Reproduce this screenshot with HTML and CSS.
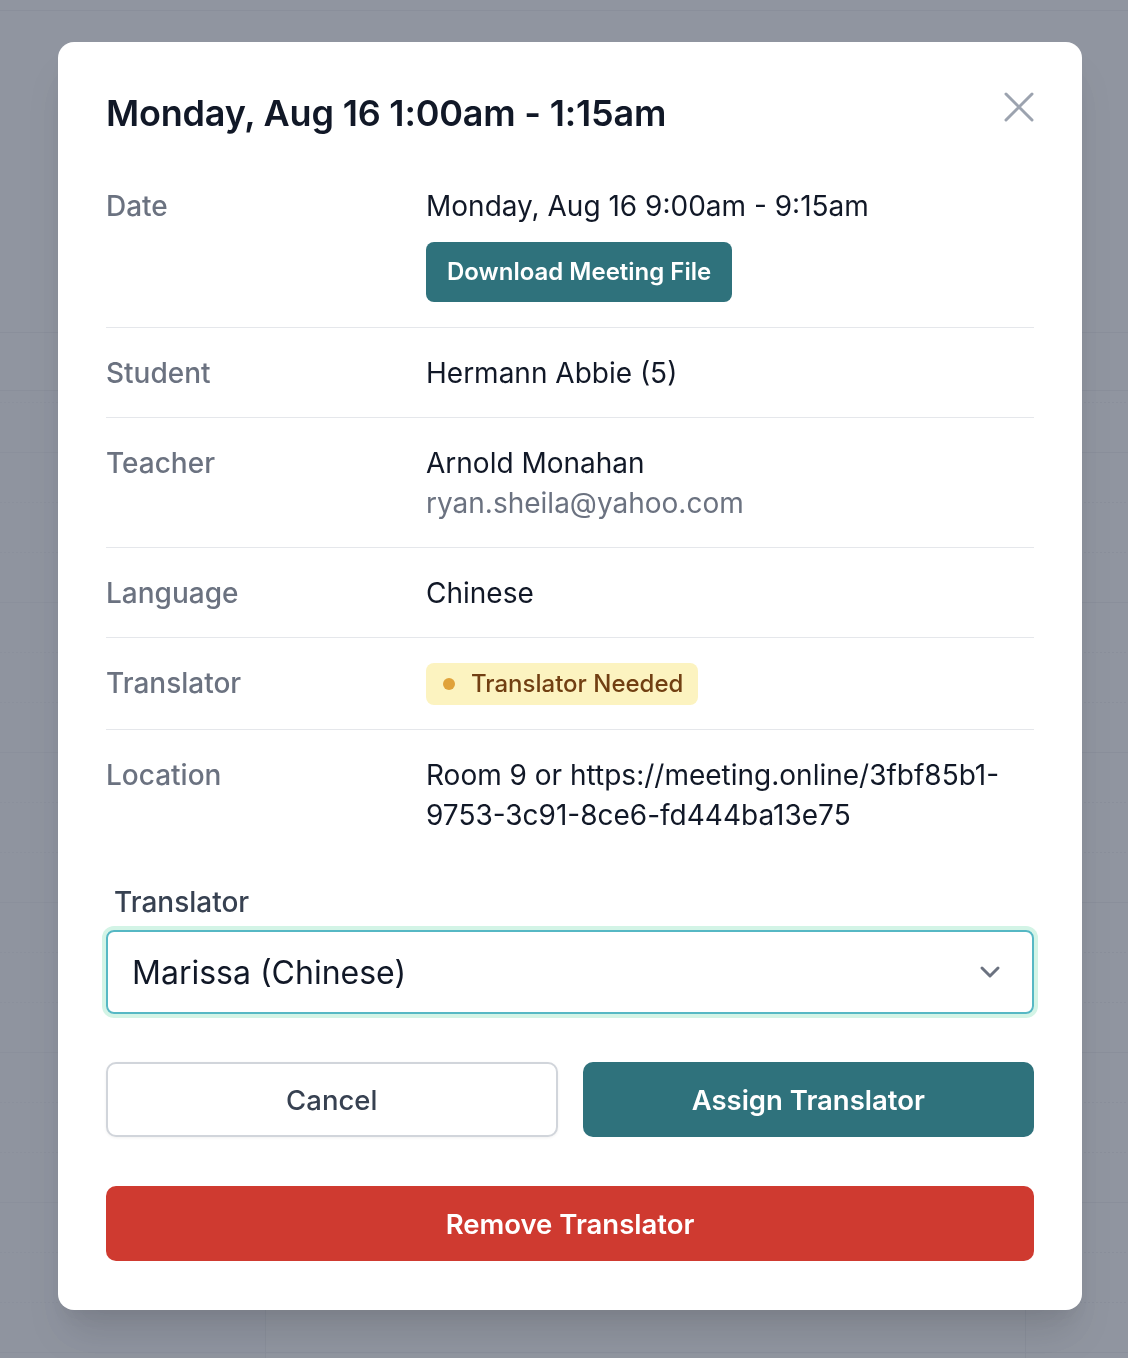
FILE: index.html
```html
<!DOCTYPE html>
<html lang="en">
<head>
<meta charset="utf-8">
<title>Meeting details</title>
<link rel="stylesheet" href="styles.css">
</head>
<body>
<div class="calendar">
  <div class="cal-top"></div>
  <div class="cal-head"></div>
  <div class="cal-days"></div>
  <div class="cal-body">
    <div class="cal-col cal-col-time"></div>
    <div class="cal-col cal-col-main"></div>
    <div class="cal-col cal-col-rest"></div>
  </div>
</div>

<div class="overlay">
  <div class="modal">
    <div class="modal-header">
      <h2 class="modal-title">Monday, Aug 16 1:00am - 1:15am</h2>
      <button class="close-btn" aria-label="Close">
        <svg width="30" height="30" viewBox="0 0 30 30" fill="none" stroke="currentColor" stroke-width="3" stroke-linecap="round">
          <path d="M2 2L28 28M28 2L2 28"/>
        </svg>
      </button>
    </div>

    <dl class="details">
      <div class="row row-first">
        <dt>Date</dt>
        <dd>
          <div>Monday, Aug 16 9:00am - 9:15am</div>
          <button class="btn btn-download">Download Meeting File</button>
        </dd>
      </div>
      <div class="row">
        <dt>Student</dt>
        <dd>Hermann Abbie (5)</dd>
      </div>
      <div class="row">
        <dt>Teacher</dt>
        <dd>
          <div>Arnold Monahan</div>
          <div class="muted">ryan.sheila@yahoo.com</div>
        </dd>
      </div>
      <div class="row">
        <dt>Language</dt>
        <dd>Chinese</dd>
      </div>
      <div class="row">
        <dt>Translator</dt>
        <dd><span class="badge"><span class="badge-dot"></span>Translator Needed</span></dd>
      </div>
      <div class="row row-last">
        <dt>Location</dt>
        <dd>Room 9 or https://meeting.online/3fbf85b1-9753-3c91-8ce6-fd444ba13e75</dd>
      </div>
    </dl>

    <div class="field">
      <label class="field-label">Translator</label>
      <div class="select">
        <span class="select-value">Marissa (Chinese)</span>
        <svg class="chevron" width="22" height="14" viewBox="0 0 22 14" fill="none" stroke="currentColor" stroke-width="3" stroke-linecap="round" stroke-linejoin="round">
          <path d="M3 3L11 11L19 3"/>
        </svg>
      </div>
    </div>

    <div class="actions">
      <button class="btn btn-cancel">Cancel</button>
      <button class="btn btn-assign">Assign Translator</button>
    </div>
    <button class="btn btn-remove">Remove Translator</button>
  </div>
</div>
</body>
</html>
```

FILE: styles.css
```css
* { box-sizing: border-box; }

html, body {
  margin: 0;
  padding: 0;
}

body {
  width: 1128px;
  height: 1358px;
  overflow: hidden;
  background: #ffffff;
  font-family: Inter, "Noto Sans", "Liberation Sans", sans-serif;
  color: #111827;
}

/* ---------- page behind the overlay ---------- */
.calendar {
  display: flex;
  flex-direction: column;
  height: 1358px;
}

.cal-top {
  height: 11px;
  border-bottom: 1px solid #e5e7eb;
}

.cal-head {
  height: 322px;
  border-bottom: 1px solid #e5e7eb;
}

.cal-days {
  height: 58px;
  border-bottom: 1px solid #e5e7eb;
}

.cal-body {
  flex: 1;
  display: grid;
  grid-template-columns: 266px 760px 1fr;
  background-image:
    repeating-linear-gradient(to bottom, transparent 0 61px, #e5e7eb 61px 62px, transparent 62px 150px),
    conic-gradient(from 270deg at 2px 1px, #e5e7eb 90deg, transparent 0);
  background-size: auto, 4px 50px;
  background-position: 0 0, 0 11px;
}

.cal-col {
  border-right: 1px solid #e5e7eb;
}

.cal-col-time {
  background: rgba(243, 244, 246, 0.35);
}

.cal-col-rest {
  border-right: none;
}

/* ---------- overlay + modal ---------- */
.overlay {
  position: fixed;
  inset: 0;
  background: rgba(107, 114, 128, 0.75);
  padding-top: 42px;
  padding-left: 58px;
}

.modal {
  width: 1024px;
  background: #ffffff;
  border-radius: 16px;
  padding: 48px 48px 49px;
  box-shadow: 0 30px 40px -8px rgba(0, 0, 0, 0.12), 0 12px 16px -6px rgba(0, 0, 0, 0.05);
}

.modal-header {
  display: flex;
  justify-content: space-between;
  align-items: flex-start;
  height: 46px;
}

.modal-title {
  margin: 0;
  font-size: 36px;
  line-height: 46px;
  font-weight: 600;
  color: #111827;
  letter-spacing: -0.2px;
}

.close-btn {
  margin: 2px 0 0 0;
  padding: 0;
  border: none;
  background: none;
  color: #9ca3af;
  width: 30px;
  height: 30px;
  display: flex;
}

/* ---------- details list ---------- */
.details {
  margin: 25px 0 0;
}

.row {
  display: grid;
  grid-template-columns: 320px 1fr;
  padding: 24.5px 0;
  border-bottom: 1px solid #e5e7eb;
  font-size: 28px;
  line-height: 40px;
}

.row-first {
  padding-bottom: 25.5px;
}

.row-last {
  border-bottom: none;
}

.row dt {
  color: #6b7280;
  font-weight: 500;
}

.row dd {
  margin: 0;
  color: #111827;
}

.muted {
  color: #6b7280;
}

.btn {
  font-family: inherit;
  border: none;
  cursor: pointer;
}

.btn-download {
  display: block;
  margin-top: 16px;
  height: 60px;
  padding: 0 21px;
  border-radius: 8px;
  background: #2f727c;
  color: #ffffff;
  font-size: 24px;
  font-weight: 600;
}

.badge {
  display: inline-flex;
  align-items: center;
  height: 42px;
  padding: 0 15px 0 17px;
  background: #fcf3c0;
  color: #713f12;
  border-radius: 8px;
  font-size: 24px;
  font-weight: 500;
  vertical-align: top;
}

.badge-dot {
  width: 12px;
  height: 12px;
  border-radius: 50%;
  background: #e0a23a;
  margin-right: 16px;
}

/* ---------- select field ---------- */
.field {
  margin-top: 23px;
}

.field-label {
  display: block;
  padding-left: 8px;
  font-size: 28px;
  line-height: 40px;
  font-weight: 500;
  color: #374151;
}

.select {
  margin-top: 8px;
  height: 84px;
  display: flex;
  align-items: center;
  justify-content: space-between;
  padding: 0 31px 0 24px;
  border: 2px solid #56b8c4;
  border-radius: 8px;
  box-shadow: 0 0 0 4px #d3f4e6;
  font-size: 32px;
  color: #111827;
}

.chevron {
  color: #6b7280;
}

/* ---------- buttons ---------- */
.actions {
  margin-top: 48px;
  display: grid;
  grid-template-columns: 1fr 1fr;
  gap: 25px;
}

.btn-cancel,
.btn-assign,
.btn-remove {
  height: 75px;
  border-radius: 10px;
  font-size: 27.5px;
}

.btn-cancel {
  background: #ffffff;
  border: 2px solid #d1d5db;
  color: #374151;
  font-weight: 500;
  box-shadow: 0 1px 3px rgba(0, 0, 0, 0.06);
}

.btn-assign {
  background: #2f727c;
  color: #ffffff;
  font-weight: 600;
}

.btn-remove {
  display: block;
  width: 100%;
  margin-top: 49px;
  background: #cf3a30;
  color: #ffffff;
  font-weight: 600;
}
```
